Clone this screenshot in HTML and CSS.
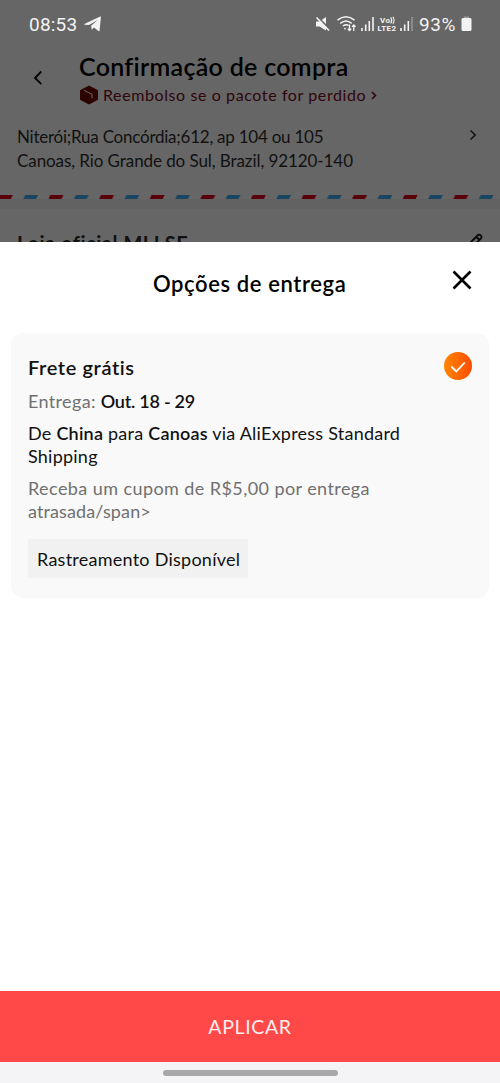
FILE: index.html
```
<!DOCTYPE html>
<html lang="pt-BR">
<head>
<meta charset="utf-8">
<title>Opções de entrega</title>
<link rel="stylesheet" href="styles.css">
</head>
<body>
<div class="screen">
  <div class="backdrop">
    <div class="status">
      <span class="clock">08:53</span>
      <svg class="telegram" width="18" height="16" viewBox="0 0 18 16"><path d="M.3 8 16.2.6q.8-.2.7.7L15.6 14.6q-.2 1-1.2.4L10 11.6l-2.300 2.100-.6-4 6.600-5.600L5 9 .8 8.800Q-.1 8.500 .3 8Z" fill="#f3f3f3"/></svg>
      <svg class="signals" width="100" height="18" viewBox="315 15 100 18" fill="none" stroke="#f3f3f3" stroke-width="1.3">
        <path d="M316 21.500h3.500l6.500-4.500v13.500l-6.500-4H316z" fill="#f3f3f3" stroke="none"/>
        <path d="m316 15.500 15 15" stroke="#666" stroke-width="2"/><path d="m316.500 17.500 12.500 13" stroke-width="1.700"/>
        <path d="M337.500 20.200q8.500-7 17 0M340.300 23.300q5.700-4.700 11.400 0M343 26q3-2.300 5.500-.3" stroke-width="1.500"/>
        <circle cx="345" cy="28.600" r=".9" fill="#f3f3f3" stroke="none"/>
        <path d="M349.500 24.500v6m-1.700-1.800 1.700 1.800 1.700-1.800M353.800 31v-6m-1.700 1.800 1.700-1.800 1.700 1.800"/>
        <path d="M362 31v-3M365.700 31v-6.500M369.300 31v-10M373 31V17M401 31v-3M404.700 31v-6.500M408.300 31v-10" stroke-width="1.600"/><path d="M412 31V17" stroke="#959595" stroke-width="1.600"/>
        <path d="M390.700 17.300q2 3.100 0 6.200M392.900 16.800q2.200 3.500 0 7" stroke-width="1.100"/>
        <text x="380" y="23.300" class="lte" textLength="10">Vo</text>
        <text x="377.500" y="31.300" class="lte" textLength="18.500">LTE2</text>
      </svg>
      <span class="percent">93%</span>
      <svg class="battery" width="11" height="16" viewBox="0 0 11 16"><path d="M3 .5h5v3H3z" fill="#999"/><rect x=".5" y="2" width="10" height="13" rx="1.500" fill="#f3f3f3"/></svg>
    </div>
    <div class="header">
      <svg class="back" width="10" height="16" viewBox="0 0 10 16"><path d="M8.300 1.500 2 8l6.300 6.200" fill="none" stroke="#000" stroke-width="1.800"/></svg>
      <div class="heading">
        <div class="title">Confirmação de compra</div>
        <div class="refund">
          <svg width="20" height="20" viewBox="0 0 20 20"><path d="m10 .5 9 4.800v9.500L10 19.500 1 14.800V5.300z" fill="#2b0400"/><path d="m5 5.300 8 4v4" fill="none" stroke="#6b5552" stroke-width="1.200"/></svg>
          <span class="refund-text">Reembolso se o pacote for perdido</span>
          <svg class="more" width="6" height="9" viewBox="0 0 6 9"><path d="m1 1 3.500 3.500L1 8" fill="none" stroke="#2f050b" stroke-width="1.500"/></svg>
        </div>
      </div>
    </div>
    <div class="address">
      <div>
        <div class="street">Niterói;Rua Concórdia;612, ap 104 ou 105</div>
        <div class="city">Canoas, Rio Grande do Sul, Brazil, 92120-140</div>
      </div>
      <svg class="next" width="8" height="12" viewBox="0 0 8 12"><path d="m1.500 1.500 4.700 4.500-4.700 4.500" fill="none" stroke="#111" stroke-width="1.500"/></svg>
    </div>
    <svg class="stripes" width="500" height="4" viewBox="0 0 500 4">
      <defs><pattern id="airmail" width="50.600" height="4" patternUnits="userSpaceOnUse" x="-1.700"><path d="M1.500 0H14.500L12.500 4H-.5Z" fill="#59000a"/><path d="M27 0h12.800l-2 4H25Z" fill="#194563"/></pattern></defs>
      <rect width="500" height="4" fill="url(#airmail)"/>
    </svg>
    <div class="divider"></div>
    <div class="store"><span>Loja oficial MLLSE</span>
      <svg width="16" height="16" viewBox="0 0 16 16" fill="none" stroke="#080808" stroke-width="1.800"><path d="m2 13 1-4 6.500-6.500q1.700-1.700 3.300 0 1.500 1.600 0 3.200L6 12.500ZM8.500 4l3 3"/></svg>
    </div>
  </div>
  <div class="sheet">
    <div class="sheet-head"><span>Opções de entrega</span>
      <svg class="close" width="20" height="20" viewBox="0 0 20 20"><path d="m1.500 1.500 17 17m0-17-17 17" stroke="#000" stroke-width="2.600"/></svg>
    </div>
    <div class="card">
      <div class="card-top"><span>Frete grátis</span>
        <svg width="28" height="28" viewBox="0 0 28 28"><defs><linearGradient id="orange"><stop stop-color="#ff8500"/><stop offset="1" stop-color="#ff4d00"/></linearGradient></defs><circle cx="14" cy="14" r="14" fill="url(#orange)"/><path d="m7.300 14.500 5 4.900 8.500-8.900" fill="none" stroke="#fff" stroke-width="1.800"/></svg>
      </div>
      <div class="delivery">Entrega: <b class="date">Out. 18 - 29</b></div>
      <div class="route">De <b>China</b> para <b>Canoas</b> via AliExpress Standard<br>Shipping</div>
      <div class="coupon">Receba um cupom de R$5,00 por entrega<br><span class="late">atrasada/span&gt;</span></div>
      <div class="tag">Rastreamento Disponível</div>
    </div>
  </div>
  <div class="apply">APLICAR</div>
  <div class="nav"><div class="pill"></div></div>
</div>
</body>
</html>
```
FILE: styles.css
```
* { box-sizing: border-box; }
body { margin: 0; font-family: Lato, "Noto Sans", sans-serif; color: #111; }
.screen { width: 500px; height: 1083px; display: flex; flex-direction: column; background: #fff; overflow: hidden; white-space: nowrap; }
.screen svg { display: block; flex: none; }

.backdrop { height: 242px; flex: none; background: #666; overflow: hidden; }
.status { height: 48px; padding-left: 29px; display: flex; align-items: center; color: #f3f3f3; font: 19px/24px Roboto, sans-serif; }
.clock { width: 49px; letter-spacing: .2px; padding-top: 1px; }
.telegram { margin-left: 6px; }
.signals { margin-left: 213px; }
.percent { margin-left: 4px; width: 42px; letter-spacing: .6px; padding-top: 1px; }
.lte { font: bold 8px Roboto, sans-serif; fill: #f3f3f3; stroke: none; }

.header { height: 66px; display: flex; padding-left: 33px; }
.back { margin-top: 22px; }
.heading { margin-left: 36px; padding-top: 2px; }
.title { font-size: 25px; font-weight: 600; line-height: 32px; color: #000; letter-spacing: .3px; }
.refund { display: flex; align-items: center; height: 25px; line-height: 25px; font-size: 16px; color: #2f050b; letter-spacing: .6px; }
.refund-text { margin-left: 4px; }
.more { margin: 2px 0 0 5px; }
.address { height: 81px; padding: 11px 23px 0 17px; display: flex; justify-content: space-between; font-size: 17px; line-height: 24px; }
.street { letter-spacing: -.24px; }
.city { letter-spacing: -.08px; }
.next { margin-top: 4px; }
.divider { height: 10px; background: #626262; }
.store { padding: 19px 16px 0 17px; display: flex; justify-content: space-between; font-size: 20px; font-weight: 700; line-height: 30px; letter-spacing: .52px; }
.store svg { margin-top: 5px; }

.sheet { flex: 1; min-height: 0; }
.sheet-head { height: 91px; padding: 26px 28px 0 153px; display: flex; justify-content: space-between; font-size: 22px; line-height: 31px; font-weight: 600; color: #000; letter-spacing: .6px; }
.close { margin-top: 2px; }
.card { margin: 0 11px; height: 265px; padding: 19px 17px; border-radius: 12px; background: #f9f9f9; font-size: 18px; line-height: 23px; }
.card-top { height: 30px; display: flex; justify-content: space-between; font-size: 20px; line-height: 30px; font-weight: 600; letter-spacing: .6px; }
.delivery { margin-top: 8px; color: #707070; letter-spacing: .35px; }
b { font-weight: 600; color: #111; }
.date { letter-spacing: -.25px; }
.route { margin-top: 9px; letter-spacing: .23px; }
.coupon { margin-top: 9px; color: #707070; letter-spacing: .42px; }
.late { letter-spacing: .12px; }
.tag { margin-top: 16px; width: 220px; height: 39px; padding-left: 9px; border-radius: 2px; background: #f1f1f1; line-height: 40px; letter-spacing: .25px; }
.apply { height: 71px; flex: none; background: #ff4848; color: #ffeeee; font-size: 19.5px; line-height: 71px; text-align: center; letter-spacing: .65px; }
.nav { height: 21px; flex: none; background: #f4f4f7; padding-top: 8px; }
.pill { width: 175px; height: 6px; margin: 0 auto; border-radius: 3px; background: #a8a8a8; }
```
